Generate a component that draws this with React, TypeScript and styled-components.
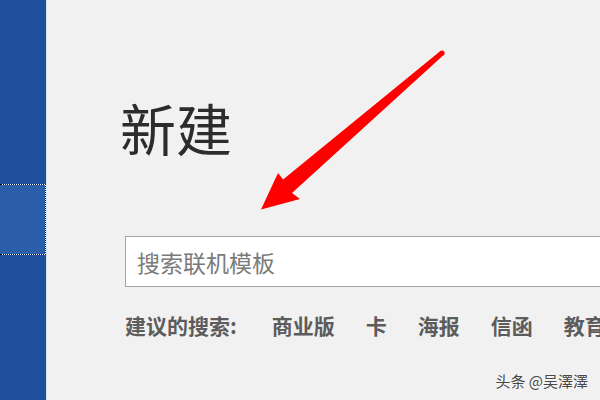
import React from 'react';
import styled, { createGlobalStyle } from 'styled-components';

const GlobalStyle = createGlobalStyle`
  html, body {
    margin: 0;
    padding: 0;
    background: #f1f1f1;
    overflow: hidden;
  }
  body {
    font-family: "Noto Sans CJK SC", "Noto Sans", sans-serif;
  }
`;

const suggestions = ['商业版', '卡', '海报', '信函', '教育'];

export default function App() {
  return (
    <>
      <GlobalStyle />
      <Page>
        <Sidebar>
          <NavItem />
        </Sidebar>
        <Main>
          <Title>新建</Title>
          <SearchBox placeholder="搜索联机模板" />
          <SuggestRow>
            <SuggestLabel>建议的搜索:</SuggestLabel>
            {suggestions.map(s => (
              <SuggestLink key={s}>{s}</SuggestLink>
            ))}
          </SuggestRow>
        </Main>
        <ArrowLayer width="600" height="400" viewBox="0 0 600 400">
          <polygon
            fill="#fe0000"
            points="443.6,54.9 292,193 300,199 261,209.5 278,173 283.1,179.5 440.4,51.1"
          />
          <circle cx="442" cy="53" r="2.6" fill="#fe0000" />
        </ArrowLayer>
        <Watermark>头条 @吴澤澤</Watermark>
      </Page>
    </>
  );
}

const Page = styled.div`
  position: relative;
  display: flex;
  width: 600px;
  height: 400px;
  overflow: hidden;
  background: #f1f1f1;
`;

const Sidebar = styled.div`
  flex: 0 0 46px;
  display: flex;
  flex-direction: column;
  padding-top: 184px;
  background: #1f4f9d;
  border-right: 1px solid #d9e4f2;
`;

const NavItem = styled.div`
  height: 69px;
  border: 1px dotted #111;
  border-left: none;
  background: linear-gradient(#2b5ea9, #2b5ea9) padding-box, #fff border-box;
`;

const Main = styled.div`
  flex: 1;
  min-width: 0;
  padding: 99px 0 0 78px;
  display: flex;
  flex-direction: column;
`;

const Title = styled.h1`
  margin: 0 0 0 -5px;
  font-size: 56px;
  line-height: 1;
  font-weight: 400;
  color: #2c2c2c;
`;

const SearchBox = styled.input`
  box-sizing: border-box;
  margin-top: 81px;
  width: 540px;
  height: 51px;
  padding: 0 0 0 11px;
  border: 1px solid #a5a5a5;
  background: #fff;
  font-family: "Noto Sans CJK SC", sans-serif;
  font-size: 23px;
  outline: none;

  &::placeholder {
    color: #7a7a7a;
  }
`;

const SuggestRow = styled.div`
  display: flex;
  align-items: center;
  gap: 31px;
  margin-top: 28px;
  white-space: nowrap;
  font-size: 21px;
  line-height: 1;
  font-weight: 700;
  color: #5c5c5c;
`;

const SuggestLabel = styled.span`
  margin-right: 4px;
`;

const SuggestLink = styled.span`
  cursor: pointer;
`;

const ArrowLayer = styled.svg`
  position: absolute;
  left: 0;
  top: 0;
  pointer-events: none;
`;

const Watermark = styled.div`
  position: absolute;
  right: 12px;
  bottom: 9px;
  font-size: 15px;
  color: #474747;
  text-shadow: 0 0 2px #fff;
`;
